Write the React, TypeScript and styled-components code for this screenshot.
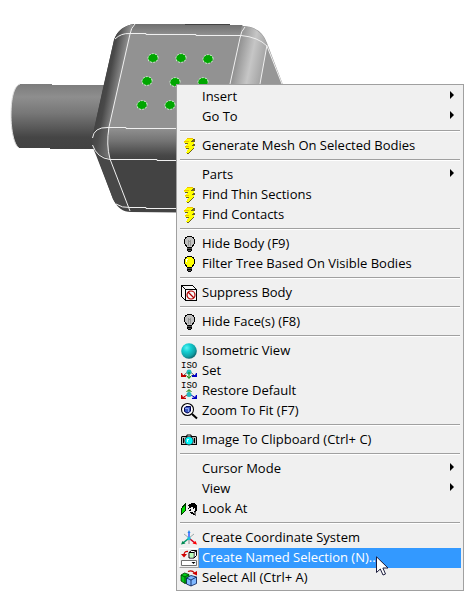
import React from "react";
import styled, { createGlobalStyle, css } from "styled-components";

const GlobalStyle = createGlobalStyle`
  *, *::before, *::after { box-sizing: border-box; }
  body {
    margin: 0;
    background: #ffffff;
    font-family: "Open Sans", "Noto Sans", sans-serif;
    overflow-x: hidden;
  }
`;

const Viewport = styled.main`
  position: relative;
  min-height: 100vh;
  background: #ffffff;
`;

const ModelDrawing = styled.svg`
  display: block;
  width: 300px;
  height: 220px;
`;

const Menu = styled.ul`
  position: absolute;
  top: 84px;
  left: 176px;
  right: 12px;
  margin: 0;
  padding: 2px;
  list-style: none;
  background: #f0f0f0;
  border: 1px solid #a0a0a0;
`;

const Separator = styled.li`
  height: 9px;
  padding: 3px 0 4px;
  margin: 0 1px;

  &::before {
    content: "";
    display: block;
    height: 2px;
    background: #ffffff;
    border-top: 1px solid #a0a0a0;
  }
`;

const Command = styled.button<{ $active?: boolean }>`
  display: flex;
  align-items: stretch;
  width: 100%;
  height: 20px;
  padding: 0;
  border: 0;
  background: transparent;
  color: #000000;
  font-family: inherit;
  font-size: 13px;
  line-height: 18px;
  text-align: left;
  white-space: nowrap;
  cursor: default;

  ${(p) => p.$active && css`color: #ffffff;`}
`;

const IconSlot = styled.span<{ $active?: boolean }>`
  display: flex;
  flex: none;
  align-items: center;
  justify-content: center;
  width: 20px;
  border: 1px solid transparent;

  ${(p) =>
    p.$active &&
    css`
      border-color: #ffffff #a0a0a0 #a0a0a0 #ffffff;
    `}

  svg {
    display: block;
    flex: none;
    width: 16px;
    height: 16px;
    overflow: visible;
  }
`;

const Label = styled.span<{ $active?: boolean }>`
  flex: 1;
  padding-left: 3px;
  background: ${(p) => (p.$active ? "#3399ff" : "transparent")};
`;

const SubmenuArrow = styled.svg`
  flex: none;
  width: 4px;
  height: 8px;
  margin: 4px 7px 0 0;
`;

const Pointer = styled.svg`
  position: absolute;
  top: 556px;
  left: 376px;
  width: 13px;
  height: 20px;
  pointer-events: none;
`;

const BoltIcon = () => (
  <svg viewBox="0 0 16 16" shapeRendering="crispEdges">
    <path d="M8 1h6v2l-2 3h2v2l-3 2h2v1l-6 5H6l2-5H5V9l3-3H4V4z" fill="#6e6420" />
    <path d="M6 0h6v1L10 4h3v1L10 8h3v1l-6 6H5l3-5H4V8l3-3H3V3z" fill="#ffff00" />
    <path d="M6 0h6v1H6zM3 3h5v1H3zM4 8h4v1H4z" fill="#f0c000" />
  </svg>
);

const BulbIcon = ({ lit = false }: { lit?: boolean }) => (
  <svg viewBox="0 0 16 16" shapeRendering="crispEdges">
    <path
      d="M6 0h5v1h2v2h1v5h-1v2h-1v1h-1v4h-1v1H7v-1H6v-4H5v-1H4V8H3V3h1V1h2z"
      fill="#000000"
    />
    <path d="M6 1h5v1h1v1h1v5h-1v1h-1v2H6V9H5V8H4V3h1V2h1z" fill={lit ? "#ffff00" : "#c0c0c0"} />
    {lit ? (
      <path d="M5 3h2v1H6v2H5z" fill="#ffffff" />
    ) : (
      <path d="M7 4h1v1h1V4h1v6H9V6H8v4H7z" fill="#969696" />
    )}
    <path d="M6 12h5v1H6zM7 14h3v1H7z" fill="#505050" />
  </svg>
);

const SuppressIcon = () => (
  <svg viewBox="0 0 16 16" fill="none">
    <path
      d="M.5.5h11l4 4v11H4.5l-4-4zM.5.5l4 4h11M4.5 4.5v11"
      fill="#f7f7f7"
      stroke="#000000"
      shapeRendering="crispEdges"
    />
    <circle cx="10" cy="10" r="4" stroke="#b00000" strokeWidth="1.2" />
    <path d="M7 7l6 6" stroke="#b00000" strokeWidth="1.2" />
  </svg>
);

const SphereIcon = () => (
  <svg viewBox="0 0 16 16">
    <defs>
      <radialGradient id="sphere" cx="0.35" cy="0.3" r="0.75">
        <stop offset="0" stopColor="#5cf4f4" />
        <stop offset="0.35" stopColor="#12cfd2" />
        <stop offset="0.75" stopColor="#109fa4" />
        <stop offset="1" stopColor="#0a5f66" />
      </radialGradient>
    </defs>
    <circle cx="8" cy="8" r="7.8" fill="url(#sphere)" />
  </svg>
);

const IsoText = styled.text`
  font-family: "Liberation Mono", monospace;
  font-size: 9px;
  fill: #000000;
`;

const IsoSetIcon = () => (
  <svg viewBox="0 0 16 16">
    <IsoText x="0" y="5">ISO</IsoText>
    <path d="M6 9.500L3 12M10 9.500L13 12" stroke="#606060" fill="none" />
    <path d="M0 10l1 0 1 2h3v2H0z" fill="#c00000" />
    <path d="M16 10l-1 0-1 2h-3v2h5z" fill="#0000c0" />
    <circle cx="8" cy="9" r="2.500" fill="#20b8bc" />
    <path d="M8 9v6M5.500 12.500L8 15.500l2.500-3" stroke="#008000" fill="none" />
  </svg>
);

const IsoRestoreIcon = () => (
  <svg viewBox="0 0 16 16">
    <IsoText x="0" y="5">ISO</IsoText>
    <path d="M8 11V7M5.500 9L8 6.500 10.500 9" stroke="#008000" fill="none" />
    <path d="M6 12l-4 2.500" stroke="#c00000" />
    <path d="M10 12l4 2.500" stroke="#0000c0" />
    <path d="M0 12h1l1 2 3 1v1H0z" fill="#c00000" />
    <path d="M16 12h-1l-1 2-3 1v1h5z" fill="#0000c0" />
    <circle cx="8" cy="11.500" r="2.500" fill="#20b8bc" />
  </svg>
);

const ZoomIcon = () => (
  <svg viewBox="0 0 16 16" fill="none">
    <circle cx="6.500" cy="6.500" r="6" fill="#ffffff" stroke="#000000" strokeWidth="1.100" />
    <path d="M11 11l5 4.500" stroke="#000000" strokeWidth="2" />
    <path d="M3.500 5L5 3.500h4.500v4.500L8 9.500l-2 .5-2.500-1.500z" fill="#3858c0" stroke="#000050" strokeWidth="1" />
    <path d="M4 5.500h3.500V9" stroke="#a8b8ff" strokeWidth=".8" />
  </svg>
);

const CameraIcon = () => (
  <svg viewBox="0 0 16 16">
    <path
      d="M1 4h4l1-1.500h4L11 4h4l1 1v8H0V5z"
      fill="#000000"
    />
    <path d="M1 5h14v7H1z" fill="#b8b8b8" />
    <path d="M2 6h1v5H2zM13 6h1v5h-1z" fill="#000000" />
    <path d="M6.500 3.500h3V5h-3z" fill="#ffffff" />
    <circle cx="8" cy="8.800" r="4.600" fill="#202020" />
    <circle cx="8" cy="8.800" r="3.800" fill="#00f4f8" />
    <path d="M6 7h2v1H7v2H6z" fill="#c8ffff" />
  </svg>
);

const LookAtIcon = () => (
  <svg viewBox="0 0 16 16" shapeRendering="crispEdges">
    <path d="M.5 7.500L4.500 2.500v7.000L.5 13.500z" fill="#00e000" stroke="#003800" />
    <path
      d="M8 3h2V2h4v1h1v1h1v6h-1v2h-1v2h-2v-1h-2v-1H9v-2H8V8H7V7h1V5H7V4h1z"
      fill="#000000"
    />
    <path d="M8 7h2V6h2v2h1V7h1v3h-1v2h-1v-1H9v-1h1V9H8z" fill="#f0f0f0" />
    <path d="M9 8h1v1H9z" fill="#000000" />
    <path d="M13 11h2v4h-1v-2h-1z" fill="#707070" />
  </svg>
);

const AxesIcon = () => (
  <svg viewBox="0 0 16 16" fill="none">
    <path d="M8 8L3 4M8 8l5-4" stroke="#9aa8a8" />
    <path d="M8 9V2" stroke="#2050ff" strokeWidth="1.400" />
    <path d="M8 0l1.500 3h-3z" fill="#2080f0" />
    <path d="M7 9l-5 4" stroke="#009868" strokeWidth="1.600" />
    <path d="M0 14.500L1.500 11 4.500 13.500z" fill="#008850" />
    <path d="M9 9l5 4" stroke="#d00020" strokeWidth="1.600" />
    <path d="M16 14.500l-4.500-1 3-2.500z" fill="#ff0000" />
    <path d="M8 10v4" stroke="#909090" />
    <circle cx="8" cy="8.500" r="1.800" fill="#20c0d8" />
  </svg>
);

const NamedSelectionIcon = () => (
  <svg viewBox="0 0 16 16" fill="none">
    <path d="M7 1.500Q3 1 3 5" stroke="#d00000" strokeWidth="1.300" />
    <path d="M0 4h6L3 7.500z" fill="#d00000" />
    <path d="M8 2.500L10.500.5h5v5L13 8H8z" fill="#ffffff" stroke="#000000" />
    <path d="M8 2.500h5V8M13 2.500l2.500-2" stroke="#000000" />
    <path d="M9 3h3.500v4.500H9z" fill="#b8ffb8" />
    <path d="M.5 10.500h15v5H.5z" fill="#ffffff" stroke="#707070" />
    <path d="M10.500 12h4l-2 2z" fill="#000000" />
  </svg>
);

const SelectAllIcon = () => (
  <svg viewBox="0 0 16 16" fill="none">
    <path d="M0 5l3.500-2L8 4.500V12L4 13.500 0 11z" fill="#00c818" stroke="#003800" strokeWidth=".8" />
    <path d="M0 5l4 2 4-2.500M4 7v6.500" stroke="#003800" strokeWidth=".8" />
    <path d="M5.500 8L10 5.500 15.500 7v6.500L10 16l-4.500-2z" fill="#80b8ff" stroke="#001850" strokeWidth=".8" />
    <path d="M5.500 8l4.500 2 5.500-3M10 10v6" stroke="#001850" strokeWidth=".8" />
    <path d="M7 1.500Q11-.5 13.500 3" stroke="#c00000" strokeWidth="1.200" />
    <path d="M11.500 3.500L16 1v4.500z" fill="#d00000" />
  </svg>
);

type Entry = { label: string; icon?: React.ReactNode; submenu?: boolean; active?: boolean };

const groups: Entry[][] = [
  [
    { label: "Insert", submenu: true },
    { label: "Go To", submenu: true },
  ],
  [{ label: "Generate Mesh On Selected Bodies", icon: <BoltIcon /> }],
  [
    { label: "Parts", submenu: true },
    { label: "Find Thin Sections", icon: <BoltIcon /> },
    { label: "Find Contacts", icon: <BoltIcon /> },
  ],
  [
    { label: "Hide Body (F9)", icon: <BulbIcon /> },
    { label: "Filter Tree Based On Visible Bodies", icon: <BulbIcon lit /> },
  ],
  [{ label: "Suppress Body", icon: <SuppressIcon /> }],
  [{ label: "Hide Face(s) (F8)", icon: <BulbIcon /> }],
  [
    { label: "Isometric View", icon: <SphereIcon /> },
    { label: "Set", icon: <IsoSetIcon /> },
    { label: "Restore Default", icon: <IsoRestoreIcon /> },
    { label: "Zoom To Fit (F7)", icon: <ZoomIcon /> },
  ],
  [{ label: "Image To Clipboard (Ctrl+ C)", icon: <CameraIcon /> }],
  [
    { label: "Cursor Mode", submenu: true },
    { label: "View", submenu: true },
    { label: "Look At", icon: <LookAtIcon /> },
  ],
  [
    { label: "Create Coordinate System", icon: <AxesIcon /> },
    { label: "Create Named Selection (N)...", icon: <NamedSelectionIcon />, active: true },
    { label: "Select All (Ctrl+ A)", icon: <SelectAllIcon /> },
  ],
];

const points = [
  [153, 58], [181, 58], [208, 59],
  [147, 81], [175, 82], [203, 82],
  [142, 105], [170, 105],
];

const Model = () => (
  <ModelDrawing viewBox="0 0 300 220" role="img" aria-label="Solid model with selected points">
    <defs>
      <linearGradient id="shaft" x1="0" y1="0" x2="0" y2="1">
        <stop offset="0" stopColor="#7c7c7c" />
        <stop offset="0.2" stopColor="#8e8e8e" />
        <stop offset="0.45" stopColor="#777777" />
        <stop offset="0.82" stopColor="#454545" />
        <stop offset="1" stopColor="#424242" />
      </linearGradient>
      <linearGradient id="leftRound" gradientUnits="userSpaceOnUse" x1="105" y1="78" x2="121" y2="81">
        <stop offset="0" stopColor="#444444" />
        <stop offset="0.25" stopColor="#494949" />
        <stop offset="1" stopColor="#919191" />
      </linearGradient>
      <linearGradient id="topRound" x1="0" y1="0" x2="0" y2="1">
        <stop offset="0" stopColor="#707070" />
        <stop offset="1" stopColor="#929292" />
      </linearGradient>
      <linearGradient id="lowRound" x1="0" y1="0" x2="0" y2="1">
        <stop offset="0" stopColor="#919191" />
        <stop offset="0.4" stopColor="#747474" />
        <stop offset="0.85" stopColor="#474747" />
        <stop offset="1" stopColor="#424242" />
      </linearGradient>
      <linearGradient id="rightRound" gradientUnits="userSpaceOnUse" x1="236" y1="60" x2="265" y2="66">
        <stop offset="0" stopColor="#929292" />
        <stop offset="0.5" stopColor="#c6c6c6" />
        <stop offset="1" stopColor="#a0a0a0" />
      </linearGradient>
      <linearGradient id="corner" x1="0" y1="0" x2="1" y2="0.3">
        <stop offset="0" stopColor="#444444" />
        <stop offset="0.4" stopColor="#4c4c4c" />
        <stop offset="1" stopColor="#707070" />
      </linearGradient>
    </defs>
    <path d="M20 84H52V85H106V149H50V148H19C14 145 11 130 11 115C11 98 14 86 20 84Z" fill="url(#shaft)" />
    <path d="M20 84C14 86 11 98 11 115C11 130 14 145 19 148" fill="none" stroke="#e0e0e0" />
    <path d="M135 24C124 25 117 31 114 40L103 88L93 134Q91 146 96 155L113 199Q119 212 131 212L230 213V24Z" fill="#434343" />
    <path d="M135 24C124 25 117 31 114 40L93 134L109 140L130 33Z" fill="url(#leftRound)" />
    <path d="M133 24H185V25H242L252 36L130 34Z" fill="url(#topRound)" />
    <path d="M130 33L242 35L226 130L109 128Z" fill="#929292" />
    <path d="M108 128L240 129V160H110Z" fill="url(#lowRound)" />
    <path d="M108 128Q94 129 92 140Q93 157 110 160Z" fill="url(#corner)" />
    <path d="M96 153L110 159L130 211Q117 208 113 199Z" fill="#484848" />
    <path d="M242 26Q261 26 267 43L285 90H230Z" fill="#979797" />
    <path d="M242 26Q261 27 267 44L259 90H230Z" fill="url(#rightRound)" />
    <g fill="none" stroke="#f0f0f0" strokeWidth="1">
      <path d="M135 24Q131 28 130 34L109 127Q106 145 110 159L130 211" />
      <path d="M115 39Q121 33 130 33.500H146V34.500H196V35.500H241Q258 37 267 46L282 84" />
      <path d="M245 27Q241 31 240 38L230 84M267 45L260 84" />
      <path d="M92.500 138Q94 127 108 127.500H126V128.500H180" />
      <path d="M92.500 145Q97 158 110 159.500H157V160.500H180" />
      <path d="M116 204Q122 208 130 207.500H146V208.500H180" />
    </g>
    {points.map(([x, y]) => (
      <g key={`${x}-${y}`}>
        <ellipse cx={x} cy={y} rx="5" ry="4.200" fill="#00a600" stroke="#d8ffd8" strokeWidth="1" strokeDasharray="2 1" transform={`rotate(-15 ${x} ${y})`} />
        <ellipse cx={x} cy={y} rx="4.500" ry="3.800" fill="#00a600" />
      </g>
    ))}
  </ModelDrawing>
);

export default function App() {
  return (
    <Viewport>
      <GlobalStyle />
      <Model />
      <Menu role="menu">
        {groups.map((group, index) => (
          <React.Fragment key={group[0].label}>
            {index > 0 && <Separator role="separator" />}
            {group.map(({ label, icon, submenu, active }) => (
              <li key={label} role="none">
                <Command type="button" role="menuitem" aria-haspopup={submenu ? "menu" : undefined} $active={active}>
                  <IconSlot $active={active}>{icon}</IconSlot>
                  <Label $active={active}>{label}</Label>
                  {submenu && (
                    <SubmenuArrow viewBox="0 0 4 8" aria-hidden="true">
                      <path d="M0 0L4 4L0 8Z" />
                    </SubmenuArrow>
                  )}
                </Command>
              </li>
            ))}
          </React.Fragment>
        ))}
      </Menu>
      <Pointer viewBox="0 0 13 20" aria-hidden="true">
        <path
          d="M.5 .8V16.500L4.300 13L7 19L9.500 18L6.900 12H12Z"
          fill="#ffffff"
          stroke="#1c1c3c"
        />
      </Pointer>
    </Viewport>
  );
}
